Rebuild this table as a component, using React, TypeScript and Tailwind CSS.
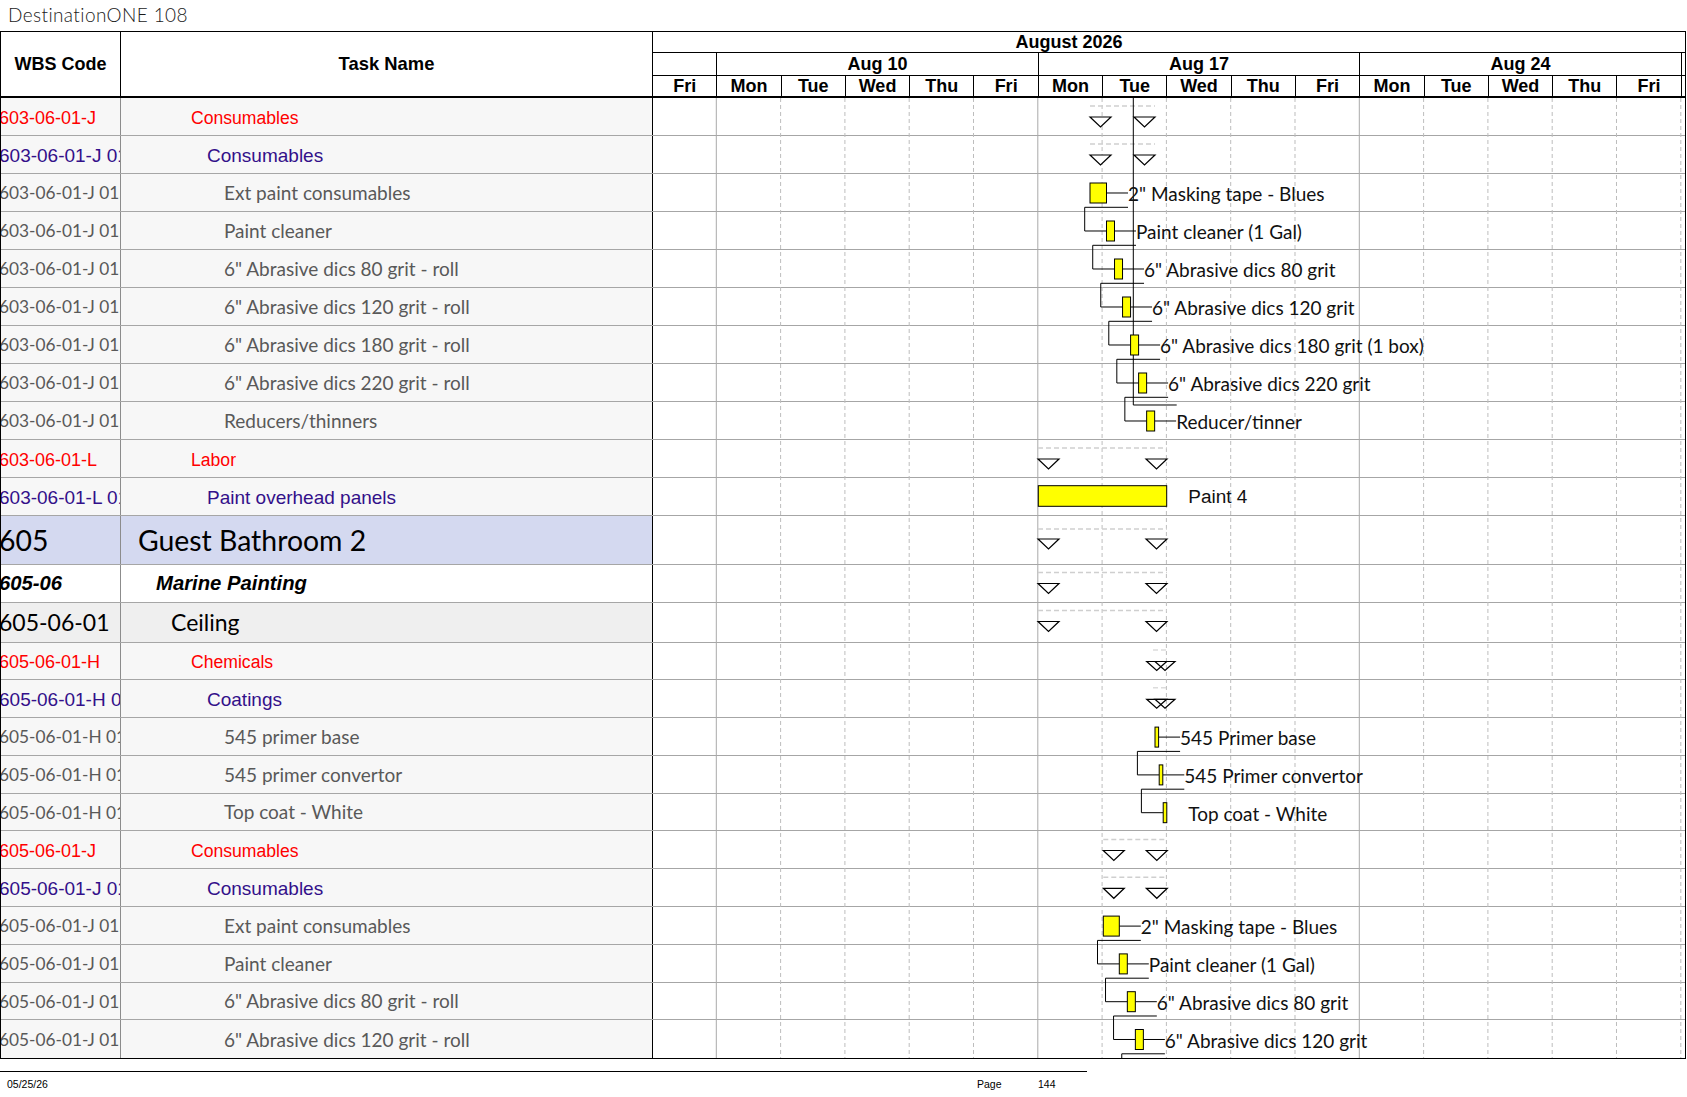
import React from "react";

const ARIAL = "[font-family:'Liberation_Sans',Arial,sans-serif]";
const CAL = "[font-family:Lato,'Open_Sans',sans-serif]";

const DAY = 64.3;
const GX = 652;

type Kind = "red" | "purple" | "task" | "l1" | "l2" | "l3";
interface Row {
  wbs: string;
  name: string;
  kind: Kind;
  h: number;
}

const r = (wbs: string, name: string, kind: Kind, h = 38): Row => ({ wbs, name, kind, h });

const rows: Row[] = [
  r("603-06-01-J", "Consumables", "red"),
  r("603-06-01-J 01", "Consumables", "purple"),
  r("603-06-01-J 01.01", "Ext paint consumables", "task"),
  r("603-06-01-J 01.02", "Paint cleaner", "task"),
  r("603-06-01-J 01.03", '6" Abrasive dics 80 grit - roll', "task"),
  r("603-06-01-J 01.04", '6" Abrasive dics 120 grit - roll', "task"),
  r("603-06-01-J 01.05", '6" Abrasive dics 180 grit - roll', "task"),
  r("603-06-01-J 01.06", '6" Abrasive dics 220 grit - roll', "task"),
  r("603-06-01-J 01.07", "Reducers/thinners", "task"),
  r("603-06-01-L", "Labor", "red"),
  r("603-06-01-L 01", "Paint overhead panels", "purple"),
  r("605", "Guest Bathroom 2", "l1", 48.5),
  r("605-06", "Marine Painting", "l2"),
  r("605-06-01", "Ceiling", "l3", 40),
  r("605-06-01-H", "Chemicals", "red", 37.8),
  r("605-06-01-H 01", "Coatings", "purple", 37.8),
  r("605-06-01-H 01.01", "545 primer base", "task", 37.8),
  r("605-06-01-H 01.02", "545 primer convertor", "task", 37.8),
  r("605-06-01-H 01.03", "Top coat - White", "task", 37.8),
  r("605-06-01-J", "Consumables", "red", 37.8),
  r("605-06-01-J 01", "Consumables", "purple", 37.8),
  r("605-06-01-J 01.01", "Ext paint consumables", "task", 37.8),
  r("605-06-01-J 01.02", "Paint cleaner", "task", 37.8),
  r("605-06-01-J 01.03", '6" Abrasive dics 80 grit - roll', "task", 37.8),
  r("605-06-01-J 01.04", '6" Abrasive dics 120 grit - roll', "task", 37.8),
];

const tops: number[] = [];
rows.reduce((acc, row) => {
  tops.push(acc);
  return acc + row.h;
}, 0);
const bodyH = tops[tops.length - 1] + rows[rows.length - 1].h;

const kindStyle: Record<Kind, { bg: string; wbs: string; name: string; pad: string }> = {
  red: { bg: "bg-[#f7f7f7]", wbs: `${ARIAL} text-[18px] text-[#ff0000] pt-[3px]`, name: `${ARIAL} text-[17.6px] text-[#ff0000] pt-[3px]`, pad: "pl-[70px]" },
  purple: { bg: "bg-[#f7f7f7]", wbs: `${ARIAL} text-[19px] text-[#33108a] pt-[3px]`, name: `${ARIAL} text-[19px] text-[#33108a] pt-[3px]`, pad: "pl-[86px]" },
  task: { bg: "bg-[#f7f7f7]", wbs: `${CAL} text-[17.3px] text-[#595959] pt-[1px]`, name: `${CAL} text-[19px] text-[#595959] pt-[1px]`, pad: "pl-[103px]" },
  l1: { bg: "bg-[#d4d9f0]", wbs: `${CAL} text-[28.4px] text-black pt-[1px]`, name: `${CAL} text-[28.4px] text-black pt-[1px]`, pad: "pl-[17px]" },
  l2: { bg: "bg-white", wbs: `${ARIAL} text-[20.3px] font-bold italic text-black`, name: `${ARIAL} text-[20.3px] font-bold italic text-black`, pad: "pl-[35px]" },
  l3: { bg: "bg-[#efefef]", wbs: `${CAL} text-[23px] text-black`, name: `${CAL} text-[23px] text-black`, pad: "pl-[50px]" },
};

const days = ["Fri", "Mon", "Tue", "Wed", "Thu", "Fri", "Mon", "Tue", "Wed", "Thu", "Fri", "Mon", "Tue", "Wed", "Thu", "Fri"];

// summary rows: [row, x0, x1]
const summaries: [number, number, number][] = [
  [0, 1090, 1155],
  [1, 1090, 1155],
  [9, 1038, 1167],
  [11, 1038, 1167],
  [12, 1038, 1167],
  [13, 1038, 1167],
  [19, 1103.3, 1167.3],
  [20, 1103.3, 1167.3],
];

interface Bar {
  row: number;
  x: number;
  w: number;
  label: string;
  leader?: boolean;
}

const chain = (row0: number, x0: number, w0: number, step: number, w: number, labels: string[], leaders = true): Bar[] =>
  labels.map((label, i) => ({
    row: row0 + i,
    x: i === 0 ? x0 : x0 + w0 + step * (i - 1),
    w: i === 0 ? w0 : w,
    label,
    leader: leaders,
  }));

const groupA = chain(2, 1090, 16.5, 8.03, 8, [
  '2" Masking tape - Blues',
  "Paint cleaner (1 Gal)",
  '6" Abrasive dics 80 grit',
  '6" Abrasive dics 120 grit',
  '6" Abrasive dics 180 grit (1 box)',
  '6" Abrasive dics 220 grit',
  "Reducer/tinner",
]);
const groupB: Bar[] = [
  { row: 16, x: 1155, w: 3.6, label: "545 Primer base", leader: true },
  { row: 17, x: 1159.2, w: 3.6, label: "545 Primer convertor", leader: true },
  { row: 18, x: 1163.2, w: 3.6, label: "Top coat - White", leader: false },
];
const groupC = chain(21, 1103.3, 16, 8.03, 8, [
  '2" Masking tape - Blues',
  "Paint cleaner (1 Gal)",
  '6" Abrasive dics 80 grit',
  '6" Abrasive dics 120 grit',
]);

function Tri({ x, y, w = 21, h = 10 }: { x: number; y: number; w?: number; h?: number }) {
  return <polygon points={`${x},${y} ${x + w},${y} ${x + w / 2},${y + h}`} fill="white" stroke="black" strokeWidth={1.2} />;
}

function BarGroup({ bars, tail }: { bars: Bar[]; tail?: boolean }) {
  return (
    <g>
      {bars.map((b, i) => {
        const t = tops[b.row];
        const end = b.x + b.w;
        const tx = end + 21.5;
        const next = bars[i + 1];
        const cy = t + 19;
        let conn: React.ReactNode = null;
        if (next || tail) {
          const nx = next ? next.x : end + 0.2;
          const nt = next ? tops[next.row] : t + rows[b.row].h;
          const lx = nx - 21.8;
          conn = (
            <polyline
              points={`${tx},${t + 33.3} ${lx},${t + 33.3} ${lx},${nt + 19} ${nx},${nt + 19}`}
              fill="none"
              stroke="black"
              strokeWidth={1}
            />
          );
        }
        return (
          <g key={i}>
            {conn}
            {b.leader && <line x1={end} y1={cy} x2={tx} y2={cy} stroke="black" strokeWidth={1} />}
            <rect x={b.x} y={t + 9} width={b.w} height={20} fill="#ffff00" stroke="black" strokeWidth={1} />
            <text x={tx} y={t + 27.3} fontFamily="Lato, sans-serif" fontSize={19} fill="#111">
              {b.label}
            </text>
          </g>
        );
      })}
    </g>
  );
}

function Gantt() {
  return (
    <svg
      className="absolute top-0 left-[651px] pointer-events-none"
      width={1033}
      height={bodyH}
      viewBox={`${GX} 0 1033 ${bodyH}`}
    >
      {Array.from({ length: 16 }, (_, i) => i + 1).map((d) => {
        const x = GX + DAY * d;
        const solid = d === 1 || d === 6 || d === 11;
        return (
          <line
            key={d}
            x1={x}
            y1={0}
            x2={x}
            y2={bodyH}
            stroke={solid ? "#a9a9a9" : "#bdbdbd"}
            strokeWidth={1}
            strokeDasharray={solid ? undefined : "4 3"}
          />
        );
      })}

      {summaries.map(([row, x0, x1]) => {
        const t = tops[row];
        const big = rows[row].h > 45;
        const dy = big ? 13 : 8;
        const ty = big ? 23 : 19;
        return (
          <g key={row}>
            <line x1={x0} y1={t + dy} x2={x1} y2={t + dy} stroke="#cfcfcf" strokeWidth={1.6} strokeDasharray="5 3" />
            <Tri x={x0} y={t + ty} />
            <Tri x={x1 - 21} y={t + ty} />
          </g>
        );
      })}

      {[14, 15].map((row) => {
        const t = tops[row];
        return (
          <g key={row}>
            <line x1={1153} y1={t + 7.5} x2={1167} y2={t + 7.5} stroke="#dcdcdc" strokeWidth={1.4} strokeDasharray="5 3" />
            <Tri x={1146.7} y={t + 19} w={20} h={9} />
            <polygon
              points={`${1155},${t + 19} ${1175},${t + 19} ${1165},${t + 28}`}
              fill="none"
              stroke="black"
              strokeWidth={1.2}
            />
          </g>
        );
      })}

      <polyline points={`1133.3,0 1133.3,${tops[8] + 3} 1176.7,${tops[8] + 3}`} fill="none" stroke="black" strokeWidth={1} />

      <BarGroup bars={groupA} />
      <BarGroup bars={groupB} />
      <BarGroup bars={groupC} tail />

      <rect x={1038.3} y={tops[10] + 7.7} width={128.4} height={20.6} fill="#ffff00" stroke="black" strokeWidth={1} />
      <text x={1188.3} y={tops[10] + 25.3} fontFamily="'Liberation Sans', Arial, sans-serif" fontSize={19} fill="#111">
        Paint 4
      </text>
    </svg>
  );
}

function Header() {
  return (
    <div className="flex h-[66px] border-b-2 border-black">
      <div className={`w-[120px] shrink-0 border-r border-black flex items-center justify-center ${ARIAL} text-[18px] font-bold text-black`}>
        WBS Code
      </div>
      <div className={`w-[531px] shrink-0 flex items-center justify-center ${ARIAL} text-[18.4px] font-bold text-black`}>
        Task Name
      </div>
      <div className={`flex-1 border-l border-black flex flex-col ${ARIAL} text-[18px] font-bold text-black`}>
        <div className="h-[21px] border-b border-black flex items-center">
          <div className="w-[832px] text-center leading-none">August 2026</div>
        </div>
        <div className="h-[23px] border-b border-black flex">
          <div className="w-[64.3px] border-r border-black" />
          {["Aug 10", "Aug 17", "Aug 24"].map((w) => (
            <div key={w} className="w-[321.5px] border-r border-black flex items-center justify-center leading-none">
              {w}
            </div>
          ))}
        </div>
        <div className="flex-1 flex">
          {days.map((d, i) => (
            <div key={i} className="w-[64.3px] border-r border-black flex items-center justify-center leading-none">
              {d}
            </div>
          ))}
        </div>
      </div>
    </div>
  );
}

export default function App() {
  return (
    <div className="w-[1687px] h-[1097px] bg-white relative overflow-hidden">
      <div className="h-[31px] pl-[8px] flex items-center">
        <span className="[font-family:Lato,sans-serif] font-light text-[19px] text-[#1a1a1a] tracking-[0.4px]">DestinationONE 108</span>
      </div>

      <div className="w-[1686px] border border-black">
        <Header />
        <div className="relative">
          {rows.map((row, i) => {
            const s = kindStyle[row.kind];
            const last = i === rows.length - 1;
            return (
              <div
                key={i}
                className={`flex ${last ? "" : "border-b border-[#a6a6a6]"}`}
                style={{ height: row.h }}
              >
                <div className={`w-[120px] shrink-0 border-r border-[#8c8c8c] overflow-hidden flex items-center ${s.bg}`}>
                  <span className={`whitespace-nowrap -ml-[2px] ${s.wbs}`}>{row.wbs}</span>
                </div>
                <div className={`w-[531px] shrink-0 overflow-hidden flex items-center ${s.pad} ${s.bg}`}>
                  <span className={`whitespace-nowrap ${s.name}`}>{row.name}</span>
                </div>
                <div className="flex-1 border-l border-black bg-white" />
              </div>
            );
          })}
          <Gantt />
        </div>
      </div>

      <div className="w-[1087px] border-t border-black mt-[12px]" />
      <div className="relative h-[20px] [font-family:'Liberation_Sans_Narrow','Liberation_Sans',sans-serif] text-[10.5px] text-black">
        <span className="absolute left-[7px] top-[5px]">05/25/26</span>
        <span className="absolute left-[977px] top-[5px]">Page</span>
        <span className="absolute left-[1038px] top-[5px]">144</span>
      </div>
    </div>
  );
}
